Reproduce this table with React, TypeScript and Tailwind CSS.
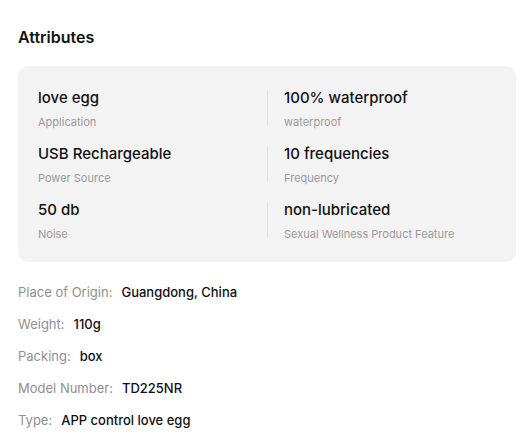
import React from "react";

const attrs = [
  ["love egg", "Application"],
  ["100% waterproof", "waterproof"],
  ["USB Rechargeable", "Power Source"],
  ["10 frequencies", "Frequency"],
  ["50 db", "Noise"],
  ["non-lubricated", "Sexual Wellness Product Feature"],
];

const details = [
  ["Place of Origin:", "Guangdong, China"],
  ["Weight:", "110g"],
  ["Packing:", "box"],
  ["Model Number:", "TD225NR"],
  ["Type:", "APP control love egg"],
];

export default function App() {
  return (
    <div
      className="w-[526px] h-[445px] bg-white pl-[18px] pr-[10px] pt-[27px]"
      style={{ fontFamily: "Inter, 'Noto Sans', sans-serif" }}
    >
      <h2 className="text-[16px] leading-[20px] font-semibold text-[#111]">Attributes</h2>
      <div className="mt-[19px] w-[498px] rounded-[10px] bg-[#f3f3f3] px-[20px] py-[24px] grid grid-cols-2 gap-y-[20px]">
        {attrs.map(([v, l], i) => (
          <div
            key={i}
            className={
              "h-[36px] flex flex-col " +
              (i % 2 === 1 ? "border-l border-[#dddddd] pl-[16px]" : "")
            }
          >
            <div className="text-[15px] leading-[16px] font-[550] text-[#111111] whitespace-nowrap">{v}</div>
            <div className="mt-[9px] text-[11px] leading-[14px] text-[#9a9a9a] whitespace-nowrap">{l}</div>
          </div>
        ))}
      </div>
      <div className="mt-[21px] flex flex-col gap-[14px]">
        {details.map(([l, v], i) => (
          <div key={i} className="flex items-center gap-[9px] text-[13px] leading-[18px] whitespace-nowrap">
            <span className="text-[#8f8f8f]">{l}</span>
            <span className="font-[550] text-[#111111]">{v}</span>
          </div>
        ))}
      </div>
    </div>
  );
}
